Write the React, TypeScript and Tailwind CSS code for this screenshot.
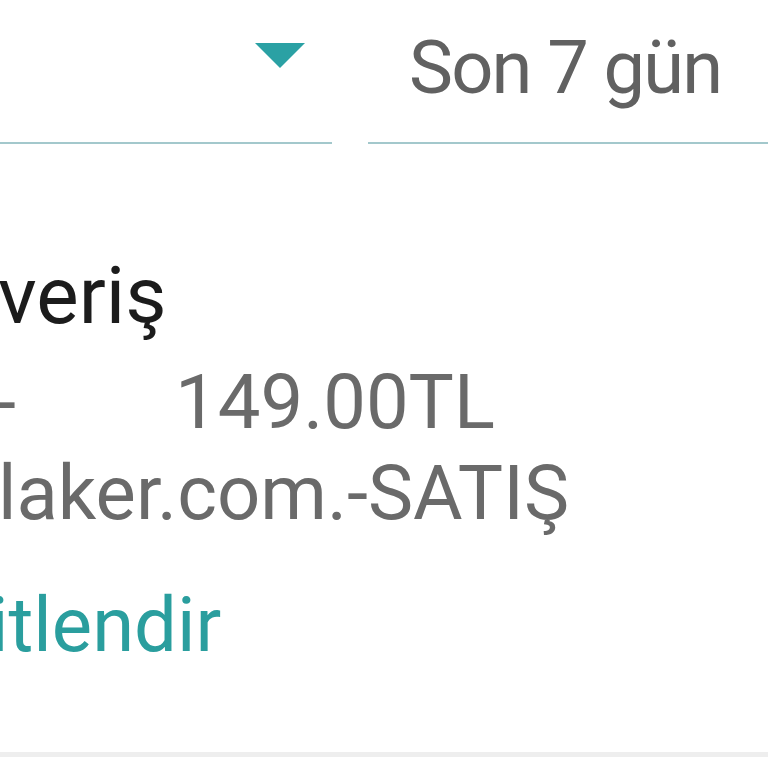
import React from 'react';

const font = { fontFamily: 'Roboto, "Noto Sans", sans-serif' };

export default function App() {
  return (
    <div className="h-[768px] w-[768px] overflow-hidden bg-white" style={font}>
      {/* filter row */}
      <div className="flex h-[144px] gap-[36px]">
        <div className="flex w-[332px] justify-end border-b-2 border-[#a3c8cc] pr-[27px] pt-[43px]">
          <svg width="50" height="25" viewBox="0 0 50 25">
            <path d="M0 0 H50 L25 25 Z" fill="#2aa1a4" />
          </svg>
        </div>
        <div className="flex-1 border-b-2 border-[#a3c8cc] pl-[41px] pt-[31px]">
          <span className="block text-[74px] leading-[74px] tracking-[-1.8px] text-[#616161]">Son 7 gün</span>
        </div>
      </div>

      {/* transaction card */}
      <div className="flex h-[613px] flex-col overflow-hidden border-b-[5px] border-[#eeeeee]">
        <div className="-ml-[2px] mt-[112px] text-[80px] leading-[80px] text-[#1c1c1c]">veriş</div>
        <div className="mt-[28px] flex items-baseline text-[76px] leading-[76px] text-[#6a6a6a]">
          <span className="-ml-[5px] w-[180px]">-</span>
          <span>149.00TL</span>
        </div>
        <div className="-ml-[2px] mt-[15px] text-[76px] leading-[76px] text-[#6a6a6a]">laker.com.-SATIŞ</div>
        <div className="-ml-[10px] mt-[56px] text-[76px] leading-[76px] text-[#2a9e9e]">itlendir</div>
      </div>
    </div>
  );
}
